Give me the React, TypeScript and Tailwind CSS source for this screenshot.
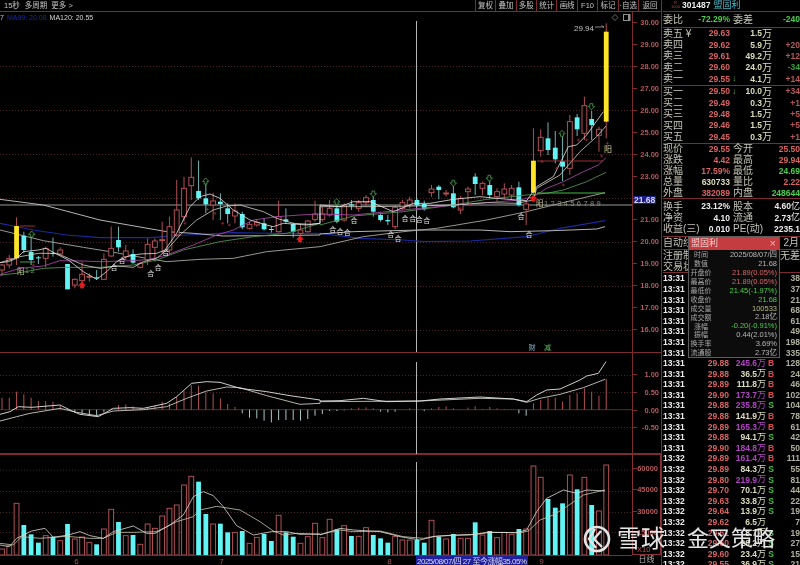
import React from "react";

type Pt = [number, number];
// points below were read off zoomed crops: x*3, y*3 relative to a panel origin
const p = (pts: Pt[], ox: number, oy: number) =>
  pts.map(([x, y]) => `${(x + ox * 3) / 3},${oy + y / 3}`).join(" ");
const join = (a: Pt[], b: Pt[], oy: number) => `${p(a, 0, oy)} ${p(b, 320, oy)}`;
const colX = (i: number) => 2 + 7.28 * i;

const RED = "#b05054";
const CYAN = "#62f4f4";
const YEL = "#ffe428";

// i, type, wickTop, bodyTop, bodyBottom, wickBottom
const candles: [number, string, number, number, number, number][] = [
  [0, "r", 222, 225, 240, 258], [1, "r", 195, 205, 225, 235], [2, "y", 82, 108, 205, 225],
  [3, "c", 125, 137, 180, 190], [4, "c", 125, 186, 210, 225], [5, "c", 198, 202, 204, 222],
  [6, "r", 170, 175, 205, 232], [7, "c", 143, 189, 191, 200], [8, "r", 172, 180, 192, 195],
  [9, "c", 222, 222, 298, 298], [10, "r", 265, 268, 285, 295], [11, "r", 215, 253, 272, 285],
  [12, "r", 250, 259, 261, 275], [13, "c", 240, 262, 265, 270], [14, "r", 190, 208, 268, 270],
  [15, "r", 110, 175, 198, 200], [16, "c", 110, 150, 172, 185], [17, "r", 165, 183, 200, 210],
  [18, "c", 178, 192, 218, 222], [19, "r", 215, 220, 232, 235], [20, "r", 145, 163, 210, 225],
  [21, "r", 145, 153, 172, 215], [22, "r", 95, 149, 152, 190], [23, "r", 80, 110, 180, 195],
  [24, "r", -30, 60, 135, 140], [25, "r", -40, -5, 80, 95], [26, "r", -98, -38, -13, 30],
  [27, "c", -88, 3, 25, 30], [28, "c", -20, 25, 43, 70], [29, "r", 8, 33, 45, 90],
  [30, "c", 10, 35, 42, 90], [31, "c", 40, 55, 72, 100], [32, "r", 40, 63, 78, 100],
  [33, "c", 65, 72, 112, 118], [34, "r", 95, 103, 115, 118], [35, "r", 90, 97, 105, 110],
  [36, "c", 85, 100, 118, 122], [37, "c", 108, 117, 119, 128], [38, "r", 32, 80, 125, 128],
  [39, "c", 55, 88, 95, 100], [40, "c", 98, 102, 125, 143], [41, "r", 105, 120, 130, 135],
  [42, "r", 90, 93, 125, 128], [43, "r", 32, 72, 88, 95], [44, "r", 50, 72, 88, 95],
  [45, "r", 30, 55, 75, 80], [46, "c", 30, 55, 95, 100], [47, "r", 40, 48, 90, 95],
  [48, "c", 30, 43, 47, 60], [49, "r", 30, 38, 55, 65], [50, "r", 15, 23, 38, 50],
  [51, "c", 15, 30, 65, 80], [52, "c", 68, 75, 90, 95], [53, "c", 75, 90, 94, 105],
  [54, "r", 45, 52, 110, 118], [55, "r", 30, 38, 55, 60], [56, "r", 20, 30, 45, 55],
  [57, "c", 25, 30, 45, 50], [58, "c", 32, 42, 58, 62], [59, "r", -15, -3, 8, 20],
  [60, "c", -15, -10, 0, 28], [61, "r", 0, 9, 11, 20], [62, "c", -12, 10, 52, 55],
  [63, "r", 18, 25, 60, 72], [64, "r", -10, -3, 5, 45], [65, "c", -50, -40, -18, 15],
  [66, "r", -25, -20, -5, 15], [67, "c", -35, -15, 15, 25], [68, "r", -5, 5, 20, 35],
  [69, "r", -20, -3, 12, 25], [70, "r", -15, -5, 15, 30], [71, "c", -25, -8, 45, 50],
  [72, "r", 35, 42, 58, 105], [73, "y", -185, -88, 8, 15], [74, "r", -182, -158, -118, -100],
  [75, "c", -203, -155, -120, -105], [76, "c", -177, -127, -92, -80], [77, "c", -160, -86, -70, -27],
  [78, "r", -225, -205, -65, -45], [79, "c", -228, -218, -182, -162], [80, "r", -280, -253, -170, -150],
  [81, "c", -237, -213, -195, -150], [82, "r", -190, -182, -164, -115], [83, "y", -500, -475, -205, -155],
];

const volTops = [
  522, 512, 385, 450, 478, 503, 482, 485, 497, 447, 492, 486, 502, 508, 462, 403, 441, 482, 480, 508, 447,
  460, 423, 400, 390, 330, 304, 320, 417, 447, 446, 472, 472, 468, 505, 487, 477, 498, 421, 472, 485, 505,
  485, 445, 488, 433, 463, 452, 483, 484, 458, 480, 490, 503, 485, 495, 495, 495, 503, 436, 485, 492, 477,
  490, 490, 442, 480, 468, 488, 472, 478, 462, 462, 273, 307, 372, 398, 385, 300, 343, 307, 390, 408, 270,
];
const volCyan = new Set([3, 4, 5, 7, 9, 13, 16, 18, 27, 28, 30, 31, 33, 36, 37, 39, 40, 46, 48, 51, 52, 53, 57, 58, 60, 62, 65, 67, 71, 75, 76, 77, 79, 81]);

const macd = [
  68, 68, 50, 58, 68, 78, 78, 80, 92, 100, 112, 116, 120, 122, 112, 100, 90, 88, 94, 100, 98, 92, 80, 85, 65, 48,
  30, 32, 52, 55, 70, 87, 96, 115, 128, 130, 137, 142, 135, 135, 135, 137, 132, 122, 117, 108, 108, 106, 100,
  98, 97, 100, 110, 112, 110, 103, 100, 102, 108, 100, 96, 94, 100, 103, 98, 94, 102, 96, 100, 102, 103, 115,
  122, 85, 75, 68, 68, 80, 60, 55, 40, 50, 62, 12,
];

const ma5a: Pt[] = [[0, 218], [25, 215], [50, 205], [70, 185], [115, 180], [138, 175], [165, 190], [205, 210], [250, 245], [290, 268], [320, 245], [350, 215], [380, 200], [420, 192], [470, 190], [495, 180], [530, 130], [570, 50], [600, 20], [630, 12], [660, 25], [700, 60], [750, 90], [800, 105], [820, 110], [850, 100], [880, 102], [920, 105], [960, 100]];
const ma5b: Pt[] = [[0, 45], [60, 50], [100, 35], [150, 35], [220, 65], [280, 40], [330, 40], [400, 28], [480, 20], [530, 25], [590, 30], [620, 32], [650, -10], [700, -40], [745, -130], [770, -135], [800, -165], [850, -235]];
const ma10a: Pt[] = [[0, 218], [60, 200], [115, 190], [170, 190], [205, 205], [250, 225], [300, 235], [350, 228], [400, 232], [430, 215], [470, 205], [500, 180], [540, 135], [590, 90], [640, 60], [680, 48], [720, 45], [790, 65], [830, 85], [880, 100], [930, 103], [960, 100]];
const ma10b: Pt[] = [[0, 50], [150, 50], [280, 48], [400, 45], [500, 38], [590, 40], [640, 30], [650, -5], [720, -45], [780, -115], [830, -160], [858, -192]];
const ma20a: Pt[] = [[0, 255], [10, 250], [60, 235], [130, 228], [180, 212], [250, 213], [300, 215], [400, 212], [450, 208], [500, 195], [580, 165], [650, 135], [700, 120], [760, 90], [830, 80], [900, 75], [960, 72]];
const ma20b: Pt[] = [[0, 72], [100, 75], [250, 60], [350, 50], [500, 38], [600, 30], [640, 20], [680, -5], [730, -25], [790, -55], [835, -75], [858, -97]];
const ma30a: Pt[] = [[0, 255], [50, 250], [130, 235], [200, 232], [300, 232], [400, 225], [470, 210], [550, 180], [660, 155], [760, 140], [860, 130], [960, 100]];
const ma30b: Pt[] = [[0, 105], [100, 78], [250, 65], [400, 45], [500, 28], [620, 15], [680, 10], [730, 0], [800, -25], [858, -53]];
const ma60a: Pt[] = [[0, 120], [130, 152], [250, 172], [330, 185], [440, 205], [500, 215], [600, 208], [700, 205], [800, 185], [960, 170]];
const ma60b: Pt[] = [[0, 170], [130, 140], [250, 125], [350, 115], [500, 90], [620, 65], [720, 40], [855, 8]];
const ma99a: Pt[] = [[0, 100], [100, 120], [200, 135], [300, 143], [450, 143], [560, 135], [700, 128], [830, 130], [960, 130]];
const ma99b: Pt[] = [[0, 130], [120, 145], [250, 150], [310, 155], [450, 153], [620, 140], [720, 115], [855, 92]];
const ma120a: Pt[] = [[0, 28], [130, 45], [300, 90], [500, 125], [580, 130], [670, 138], [800, 137], [960, 135]];
const ma120b: Pt[] = [[0, 132], [100, 125], [300, 120], [480, 120], [570, 125], [700, 122], [830, 117], [855, 110]];

const heTags: Pt[] = [[452, 250], [474, 230], [342, 230], [366, 210], [497, 185], [998, 118], [1020, 122], [1042, 125], [1062, 90], [1172, 133], [1194, 144], [1215, 85], [1238, 85], [1258, 88], [1280, 90], [1563, 78], [1587, 133]];
const greenArrows: [number, number, boolean][] = [[95, 132, false], [617, -27, false], [1010, 35, false], [1120, 12, true], [1360, -20, true], [1468, -35, true], [1686, -170, false], [1774, -250, true]];
const redArrows: Pt[] = [[246, 285], [900, 147], [1600, 25]];
const redMarks: Pt[] = [[622, 58], [668, 100], [688, 105], [555, 100], [645, 70], [100, 225], [1626, -85], [1735, -150], [1760, -150], [1805, -102], [1822, -140], [1670, -65], [1690, -15], [1380, 55], [1410, 42]];

function Arrow({ x, y, down, color, fill }: { x: number; y: number; down: boolean; color: string; fill: string }) {
  const d = down
    ? `M${x - 1.4} ${y - 3}h2.8v2.6h1.8l-3.2 3.4l-3.2-3.4h1.8z`
    : `M${x - 1.4} ${y + 3}h2.8v-2.6h1.8l-3.2-3.4l-3.2 3.4h1.8z`;
  return <path d={d} fill={fill} stroke={color} strokeWidth="0.8" />;
}

const cjk = { fontFamily: '"Liberation Sans","Noto Sans CJK SC",sans-serif' };

function Dotted({ ys }: { ys: number[] }) {
  return (
    <>
      {ys.map((y) => (
        <line key={y} x1="0" x2="632" y1={y} y2={y} stroke="#4c2628" strokeDasharray="1 2" />
      ))}
    </>
  );
}

function MainChart() {
  const y = (z: number) => 190 + z / 3;
  return (
    <svg viewBox="0 12 632 340" className="block h-[340px] w-[632px]" style={cjk}>
      <Dotted ys={[66.5, 110.5, 154.5, 198.5, 242.5, 286.5, 330.5]} />
      <line x1="0" x2="632" y1="205" y2="205" stroke="#989898" />
      <line x1="416.5" x2="416.5" y1="21" y2="352" stroke="#b4b4b4" />
      <polyline points={join(ma99a, ma99b, 190)} fill="none" stroke="#1a2a9c" strokeWidth="1.1" />
      <polyline points={join(ma120a, ma120b, 190)} fill="none" stroke="#c8c8c8" strokeWidth="0.9" />
      <polyline points={join(ma60a, ma60b, 190)} fill="none" stroke="#a8a8a0" strokeWidth="0.9" />
      {candles.map(([i, t, wt, bt, bb, wb]) => {
        const x = colX(i);
        const c = t === "c" ? "#70b4b4" : RED;
        const fill = t === "r" ? "#000" : t === "c" ? CYAN : YEL;
        return (
          <g key={i}>
            <line x1={x} x2={x} y1={y(wt)} y2={y(wb)} stroke={c} />
            <rect x={x - 2.4} y={y(bt)} width="4.8" height={Math.max((bb - bt) / 3, 1)} fill={fill} stroke={t === "r" ? RED : "none"} />
          </g>
        );
      })}
      <polyline points={join(ma30a, ma30b, 190)} fill="none" stroke="#4f904f" strokeWidth="0.9" />
      <polyline points={join(ma20a, ma20b, 190)} fill="none" stroke="#a044a0" strokeWidth="0.9" />
      <polyline points={join(ma10a, ma10b, 190)} fill="none" stroke="#d4d4c8" strokeWidth="0.8" />
      <polyline points={join(ma5a, ma5b, 190)} fill="none" stroke="#e4e4e4" strokeWidth="0.8" />
      <line x1="537" x2="605" y1="193" y2="193" stroke="#44bc44" />
      <line x1="537" x2="603" y1="161" y2="161" stroke="#9c3034" strokeWidth="1.1" />
      <line x1="20" x2="35" y1="226" y2="226" stroke="#9c3034" />
      <line x1="20" x2="35" y1="262" y2="262" stroke="#4c9c4c" />
      {redMarks.map(([mx, my]) => (
        <path key={`${mx}-${my}`} d={`M${mx / 3 - 1.5} ${y(my)}h3M${mx / 3} ${y(my) - 1.5}v3`} stroke="#a83434" strokeWidth="0.7" />
      ))}
      {greenArrows.map(([ax, ay, down]) => (
        <Arrow key={ax} x={ax / 3} y={y(ay)} down={down} color="#4ca44c" fill="#000" />
      ))}
      {redArrows.map(([ax, ay]) => (
        <Arrow key={ax} x={ax / 3} y={y(ay)} down={false} color="#e81c1c" fill="#e81c1c" />
      ))}
      {heTags.map(([hx, hy]) => (
        <text key={hx} x={hx / 3} y={y(hy) + 3} fontSize="7" fill="#e0e0e0" textAnchor="middle">合</text>
      ))}
      <text x="17" y="274" fontSize="7.5" fill="#c8c490">阳</text>
      <text x="25" y="273" fontSize="7" fill="#5f9f5f">1 2</text>
      <text x="536" y="206" fontSize="7.5" fill="#c8c490">阳</text>
      <text x="544" y="206" fontSize="7.5" fill="#8f8f78" letterSpacing="2.4">123456789</text>
      <text x="604" y="152" fontSize="8" fill="#d8d498">阳</text>
      <text x="574" y="31" fontSize="8" fill="#c0c0c0">29.94</text>
      <path d="M595 27h9l-2.5-1.5M604 27" fill="none" stroke="#c0c0c0" strokeWidth="0.7" />
      <path d="M615 14.5l3 3-3 3-3-3z" fill="none" stroke="#808080" strokeWidth="0.8" />
      <rect x="623.5" y="14.5" width="6.5" height="6" fill="none" stroke="#909090" />
      <rect x="628" y="15" width="2" height="5" fill="#909090" />
      <text x="532" y="350" fontSize="7" fill="#82bcd8" textAnchor="middle">财</text>
      <text x="547.5" y="350" fontSize="7" fill="#62c062" textAnchor="middle">减</text>
    </svg>
  );
}

function MacdChart() {
  const y = (z: number) => 375 + z / 3;
  const difA: Pt[] = [[0, 118], [30, 110], [55, 95], [95, 97], [180, 90], [210, 105], [240, 118], [295, 125], [340, 100], [390, 98], [430, 100], [500, 85], [530, 65], [575, 25], [620, 20], [660, 22], [720, 40], [800, 50], [870, 62], [960, 75]];
  const difB: Pt[] = [[0, 78], [60, 77], [130, 70], [200, 80], [300, 78], [360, 72], [480, 66], [580, 72], [620, 80], [650, 60], [680, 45], [720, 42], [780, 15], [800, 3], [835, -5], [858, -40]];
  const deaA: Pt[] = [[0, 138], [50, 125], [90, 115], [180, 100], [230, 112], [290, 122], [340, 108], [430, 104], [500, 95], [560, 70], [620, 48], [680, 36], [720, 38], [800, 62], [900, 88], [960, 85]];
  const deaB: Pt[] = [[0, 80], [300, 78], [480, 70], [580, 72], [620, 82], [660, 70], [720, 58], [790, 38], [855, 13]];
  return (
    <svg viewBox="0 353 632 101" className="block h-[101px] w-[632px]">
      <Dotted ys={[375.5, 392.5, 427.5]} />
      <line x1="0" x2="632" y1="409.7" y2="409.7" stroke="#5c2a2c" />
      <line x1="416.5" x2="416.5" y1="362" y2="454" stroke="#b4b4b4" />
      {macd.map((v, i) => (
        <line key={i} x1={colX(i)} x2={colX(i)} y1={y(104)} y2={y(v)} stroke={v < 104 ? RED : "#a8c8c8"} />
      ))}
      <polyline points={join(deaA, deaB, 375)} fill="none" stroke="#c8c8c0" strokeWidth="0.9" />
      <polyline points={join(difA, difB, 375)} fill="none" stroke="#e4e4e4" strokeWidth="0.9" />
    </svg>
  );
}

function VolumeChart() {
  const y = (z: number) => 375 + z / 3;
  const a1: Pt[] = [[0, 510], [28, 515], [50, 490], [95, 468], [135, 460], [160, 487], [205, 480], [240, 470], [270, 482], [310, 490], [340, 470], [400, 453], [440, 475], [465, 475], [510, 450], [550, 420], [580, 365], [610, 350], [640, 362], [670, 395], [710, 452], [760, 480], [815, 470], [860, 470], [900, 478], [960, 477]];
  const b1: Pt[] = [[0, 480], [60, 460], [100, 465], [180, 470], [240, 485], [300, 495], [340, 485], [400, 480], [470, 478], [510, 472], [590, 473], [620, 465], [650, 410], [680, 370], [730, 345], [770, 355], [800, 345], [855, 348]];
  const a2: Pt[] = [[0, 505], [40, 510], [65, 485], [120, 490], [200, 484], [270, 490], [310, 490], [350, 472], [400, 472], [470, 470], [530, 440], [580, 425], [600, 405], [650, 394], [720, 405], [780, 440], [820, 468], [850, 480], [890, 475], [960, 478]];
  const b2: Pt[] = [[0, 478], [60, 465], [100, 470], [180, 468], [250, 485], [310, 490], [350, 483], [450, 480], [500, 472], [600, 473], [625, 468], [660, 435], [700, 420], [740, 395], [790, 360], [855, 345]];
  return (
    <svg viewBox="0 455 632 110" className="block h-[110px] w-[632px]" style={cjk}>
      <Dotted ys={[470, 491.5, 512.5, 532.5]} />
      <line x1="416.5" x2="416.5" y1="462" y2="555" stroke="#b4b4b4" />
      {volTops.map((t, i) => {
        const cyan = volCyan.has(i);
        return (
          <rect key={i} x={colX(i) - 2.4} y={y(t)} width="4.8" height={(540 - t) / 3} fill={cyan ? CYAN : "#000"} stroke={cyan ? "none" : RED} />
        );
      })}
      <polyline points={join(a2, b2, 375)} fill="none" stroke="#c8c8a8" strokeWidth="0.8" />
      <polyline points={join(a1, b1, 375)} fill="none" stroke="#dcdcd4" strokeWidth="0.8" />
      <line x1="0" x2="632" y1="555.5" y2="555.5" stroke="#7a2c30" />
      <text x="76.5" y="564" fontSize="8" fill="#b05054" textAnchor="middle">6</text>
      <text x="221.5" y="564" fontSize="8" fill="#b05054" textAnchor="middle">7</text>
      <text x="389.5" y="564" fontSize="8" fill="#b05054" textAnchor="middle">8</text>
      <text x="541.5" y="564" fontSize="8" fill="#b05054" textAnchor="middle">9</text>
      <rect x="416" y="556" width="112" height="9" fill="#20209a" />
      <text x="417" y="564" fontSize="8" fill="#d8d8f0" textLength="110">2025/08/07/四 27 至今涨幅35.05%</text>
    </svg>
  );
}

function AxisRow({ h, children }: { h: string; children?: React.ReactNode }) {
  return (
    <div className={`flex items-center justify-between pr-[2px] text-[7.5px] font-bold text-[#b45a5c] ${h}`}>
      <span className="h-px w-[4px] bg-[#7a2c30]" />
      {children}
    </div>
  );
}

function Row({ cells }: { cells: React.ReactNode }) {
  return <div className="flex h-[11.3px] items-center">{cells}</div>;
}

const lab = "text-[10px] text-[#c4c4b8] leading-none";
const num = "text-[8.5px] font-bold leading-none text-right";
const RD = "text-[#d86464]";
const GR = "text-[#4ecc4e]";

const book: [string, string, string, string, string, string][] = [
  ["卖五 ¥", "29.63", "", "1.5", "", ""],
  ["卖四", "29.62", "", "5.9", "+20", "r"],
  ["卖三", "29.61", "", "49.2", "+12", "r"],
  ["卖二", "29.60", "", "24.0", "-34", "g"],
  ["卖一", "29.55", "↓", "4.1", "+14", "r"],
];
const bookBuy: [string, string, string, string, string, string][] = [
  ["买一", "29.50", "↓", "10.0", "+34", "r"],
  ["买二", "29.49", "", "0.3", "+1", "r"],
  ["买三", "29.48", "", "1.5", "+5", "r"],
  ["买四", "29.46", "", "1.5", "+5", "r"],
  ["买五", "29.45", "", "0.3", "+1", "r"],
];

function Book({ rows }: { rows: typeof book }) {
  return (
    <div className="border-b border-[#7a2c30] pb-[0.5px]">
      {rows.map(([l, pr, ar, v, d, dc]) => (
        <Row
          key={l}
          cells={
            <>
              <span className={`${lab} w-[20px] shrink-0 whitespace-nowrap`}>{l}</span>
              <span className={`${num} ${RD} w-[47px]`}>{pr}</span>
              <span className="w-[10px] pl-[2px] text-[9px] font-bold leading-none text-[#4ca44c]">{ar}</span>
              <span className={`${num} w-[22px] text-[#dcdcbc]`}>{v}</span>
              <span className="w-[10px] text-[10px] leading-none text-[#dcdcbc]">万</span>
              <span className={`${num} flex-1 ${dc === "g" ? "text-[#3c9c3c]" : "text-[#b45a5c]"}`}>{d}</span>
            </>
          }
        />
      ))}
    </div>
  );
}

const stats: [string, string, string, string, string, string, string][] = [
  ["现价", "29.55", RD, "今开", "25.50", RD, ""],
  ["涨跌", "4.42", RD, "最高", "29.94", RD, ""],
  ["涨幅", "17.59%", RD, "最低", "24.69", GR, ""],
  ["总量", "630733", "text-[#dcdcbc]", "量比", "2.22", RD, ""],
  ["外盘", "382089", RD, "内盘", "248644", GR, ""],
];
const stats2: [string, string, string, string, string, string, string][] = [
  ["换手", "23.12%", "text-[#ececec]", "股本", "4.60", "text-[#ececec]", "亿"],
  ["净资", "4.10", "text-[#ececec]", "流通", "2.73", "text-[#ececec]", "亿"],
  ["收益(三)", "0.010", "text-[#ececec]", "PE(动)", "2235.1", "text-[#ececec]", ""],
];

function Stat({ s, h }: { s: (typeof stats)[number]; h: string }) {
  const [a, b, c, d, e, f, u] = s;
  return (
    <div className={`flex items-center ${h}`}>
      <span className={`${lab} w-[30px] shrink-0 whitespace-nowrap`}>{a}</span>
      <span className={`${num} ${c} w-[37px]`}>{b}</span>
      <span className={`${lab} ml-[3px] w-[30px] shrink-0 whitespace-nowrap`}>{d}</span>
      <span className={`${num} ${f} flex-1`}>{e}</span>
      {u && <span className="text-[9px] leading-none text-[#ececec]">{u}</span>}
    </div>
  );
}

const P = "text-[#b044c0]";
const K = "text-[#dcdcbc]";
const trades: [string, string, string, string, string, string][] = [
  ["13:31", "", "", "", "", "38"], ["13:31", "", "", "", "", "37"], ["13:31", "", "", "", "", "21"],
  ["13:31", "", "", "", "", "68"], ["13:31", "", "", "", "", "61"], ["13:31", "", "", "", "", "49"],
  ["13:31", "", "", "", "", "198"], ["13:31", "", "", "", "", "335"],
  ["13:31", "29.88", "245.6", P, "B", "128"], ["13:31", "29.88", "36.5", K, "B", "24"],
  ["13:31", "29.89", "111.8", K, "B", "46"], ["13:31", "29.90", "173.7", P, "B", "102"],
  ["13:31", "29.88", "235.8", P, "S", "104"], ["13:31", "29.88", "141.9", K, "B", "78"],
  ["13:31", "29.89", "165.3", P, "B", "61"], ["13:31", "29.88", "94.1", K, "S", "42"],
  ["13:31", "29.90", "184.8", P, "B", "50"], ["13:32", "29.89", "161.4", P, "B", "111"],
  ["13:32", "29.89", "84.3", K, "S", "55"], ["13:32", "29.80", "219.9", P, "S", "81"],
  ["13:32", "29.70", "70.1", K, "S", "44"], ["13:32", "29.63", "33.8", K, "S", "22"],
  ["13:32", "29.64", "13.9", K, "S", "19"], ["13:32", "29.62", "6.5", K, "", "7"],
  ["13:32", "29.61", "8.7", K, "S", "19"], ["13:32", "29.60", "20.2", K, "S", "27"],
  ["13:32", "29.60", "23.4", K, "S", "15"], ["13:32", "29.55", "36.9", K, "S", "21"],
];

const popup: [string, string, string][] = [
  ["时间", "2025/08/07/四", "text-[#b8b8b8]"],
  ["数值", "21.68", "text-[#b8b8b8]"],
  ["开盘价", "21.89(0.05%)", RD],
  ["最高价", "21.89(0.05%)", RD],
  ["最低价", "21.45(-1.97%)", GR],
  ["收盘价", "21.68", GR],
  ["成交量", "100533", "text-[#b8b87c]"],
  ["成交额", "2.18亿", "text-[#b8b8b8]"],
  ["涨幅", "-0.20(-0.91%)", GR],
  ["振幅", "0.44(2.01%)", "text-[#b8b8b8]"],
  ["换手率", "3.69%", "text-[#b8b8b8]"],
  ["流通股", "2.73亿", "text-[#b8b8b8]"],
];

function Popup() {
  return (
    <div className="absolute left-[688px] top-[236px] h-[122px] w-[92px] border border-[#5c5c5c] bg-[#0c0c0c]">
      <div className="flex h-[12.5px] items-center justify-between bg-[#c43c40] px-[2px] text-[9px] text-[#f0d0d0]">
        <span className="leading-none">盟固利</span>
        <span className="pr-[1px] text-[11px] leading-none text-[#e8b8b8]">×</span>
      </div>
      <div className="pt-[1px]">
        {popup.map(([l, v, c]) => (
          <div key={l} className="flex h-[8.9px] items-center justify-between pr-[2px]">
            <span className="w-[24px] text-center text-[7px] leading-none text-[#a8a8a8]">{l}</span>
            <span className={`text-[7.5px] leading-none ${c}`}>{v}</span>
          </div>
        ))}
      </div>
    </div>
  );
}

function Watermark() {
  return (
    <div className="absolute left-[583px] top-[525px] flex items-center text-[#e4e4e4]">
      <svg width="28" height="28" viewBox="0 0 28 28">
        <circle cx="14" cy="14" r="12" fill="none" stroke="#e4e4e4" strokeWidth="2.6" />
        <path d="M12 4l-6 10 7 9M18 6l-7 8 8 8" fill="none" stroke="#e4e4e4" strokeWidth="2.4" />
      </svg>
      <span className="ml-[6px] whitespace-nowrap text-[24px] leading-none">雪球</span>
      <span className="ml-[22px] whitespace-nowrap text-[22px] leading-none">金叉策略</span>
    </div>
  );
}

export default function App() {
  const tools = ["复权", "叠加", "多股", "统计", "画线", "F10", "标记", "·自选"];
  return (
    <div className="relative flex h-[565px] w-[800px] overflow-hidden bg-black blur-[0.25px]" style={cjk}>
      <div className="w-[662px] shrink-0 border-r border-[#7a2c30]">
        {/* 顶部工具条 */}
        <div className="flex h-[12px] items-center border-b border-[#7a2c30] text-[7.5px] leading-none text-[#c4c4c4]">
          <span className="ml-[4px] whitespace-nowrap">15秒</span>
          <span className="ml-[5px] whitespace-nowrap">多周期</span>
          <span className="ml-[4px] whitespace-nowrap">更多 &gt;</span>
          <div className="ml-auto flex h-full">
            {tools.map((t) => (
              <span key={t} className="flex w-[20.4px] items-center justify-center whitespace-nowrap border-l border-[#7a2c30]">{t}</span>
            ))}
          </div>
          <span className="flex h-full w-[23px] items-center justify-center whitespace-nowrap border-l border-[#7a2c30]">返回</span>
        </div>

        <div className="relative flex h-[341px] border-b border-[#7a2c30]">
          <div className="absolute left-0 top-[2px] flex items-center gap-[3px] text-[7px] leading-none">
            <span className="text-[#c0c0c0]">7</span>
            <span className="text-[#1a2a9c]">MA99: 20.08</span>
            <span className="text-[#d8d8d8]">MA120: 20.55</span>
          </div>
          <MainChart />
          <div className="flex-1 border-l border-[#7a2c30]">
            {["30.00", "29.00", "28.00", "27.00", "26.00", "25.00", "24.00", "23.00"].map((v) => (
              <AxisRow key={v} h="h-[21.9px]">{v}</AxisRow>
            ))}
            <div className="flex h-[21.9px] translate-y-[2px] items-center">
              <span className="bg-[#1c1c8c] px-[1px] text-[8.5px] font-bold leading-[8px] text-[#d8d8f0]">21.68</span>
            </div>
            {["21.00", "20.00", "19.00", "18.00", "17.00", "16.00"].map((v) => (
              <AxisRow key={v} h="h-[21.9px]">{v}</AxisRow>
            ))}
          </div>
        </div>

        <div className="flex h-[102px] border-b-2 border-[#7a2c30]">
          <MacdChart />
          <div className="flex-1 border-l border-[#7a2c30] pt-[13px]">
            {["1.00", "0.50", "0.00", "-0.50"].map((v) => (
              <AxisRow key={v} h="h-[17.7px]">{v}</AxisRow>
            ))}
          </div>
        </div>

        <div className="flex h-[110px]">
          <VolumeChart />
          <div className="flex-1">
            <div className="h-[100px] border-x border-b border-[#8a3034] pt-[3px]">
              {["60000", "45000", "30000", "15000"].map((v) => (
                <AxisRow key={v} h="h-[21.3px]">{v}</AxisRow>
              ))}
              <div className="pl-[4px] pt-[3px] text-[7.5px] leading-none text-[#b45a5c]">X10</div>
            </div>
            <div className="text-center text-[8px] leading-[10px] text-[#b0b0b0]">日线</div>
          </div>
        </div>
      </div>

      {/* 右侧盘口 */}
      <div className="min-w-0 flex-1 pl-[1px]">
        <div className="relative flex h-[12px] items-center border-b border-[#7a2c30] pl-[8px]">
          <span className="absolute left-[8px] top-[1px] text-center text-[4px] leading-[4px] text-[#c04040]">R<br />1000</span>
          <span className="ml-[11px] text-[8.5px] font-bold leading-none text-[#ececec]">301487</span>
          <span className="ml-[3px] text-[9px] leading-none text-[#4cb8c8]">盟固利</span>
        </div>
        <div className="flex h-[16px] items-center border-b border-[#7a2c30]">
          <span className={`${lab} w-[30px]`}>委比</span>
          <span className={`${num} ${GR} w-[37px]`}>-72.29%</span>
          <span className={`${lab} ml-[3px] w-[30px]`}>委差</span>
          <span className={`${num} ${GR} flex-1`}>-240</span>
        </div>
        <Book rows={book} />
        <Book rows={bookBuy} />
        <div className="border-b border-[#7a2c30]">
          {stats.map((s) => (
            <Stat key={s[0]} s={s} h="h-[10.9px]" />
          ))}
        </div>
        <div className="border-b border-[#7a2c30] py-[1.5px]">
          {stats2.map((s) => (
            <Stat key={s[0]} s={s} h="h-[11.3px]" />
          ))}
        </div>
        <div className="flex h-[13px] items-center justify-between border-b border-[#7a2c30]">
          <span className={lab}>自动线</span>
          <span className={`${lab} pr-[1px]`}>2月</span>
        </div>
        <div className="flex h-[11.5px] items-center justify-between">
          <span className={lab}>注册制</span>
          <span className={lab}>无差</span>
        </div>
        <div className="flex h-[11.5px] items-center border-b border-[#7a2c30]">
          <span className={lab}>交易状</span>
        </div>
        <div>
          {trades.map((t, i) => (
            <div key={i} className="flex h-[10.6px] items-center text-[8.5px] font-bold leading-none">
              <span className="w-[26px] text-[#ececec]">{t[0]}</span>
              <span className={`${RD} w-[40px] text-right`}>{t[1]}</span>
              <span className={`w-[28px] text-right ${t[3]}`}>{t[2]}</span>
              <span className={`w-[9px] text-[9px] font-normal ${t[3]}`}>{t[2] && "万"}</span>
              <span className={`w-[10px] text-center ${t[4] === "S" ? "text-[#4cbc4c]" : "text-[#d84c4c]"}`}>{t[4]}</span>
              <span className="flex-1 text-right text-[#b0b0a0]">{t[5]}</span>
            </div>
          ))}
        </div>
      </div>

      <Popup />
      <Watermark />
    </div>
  );
}
